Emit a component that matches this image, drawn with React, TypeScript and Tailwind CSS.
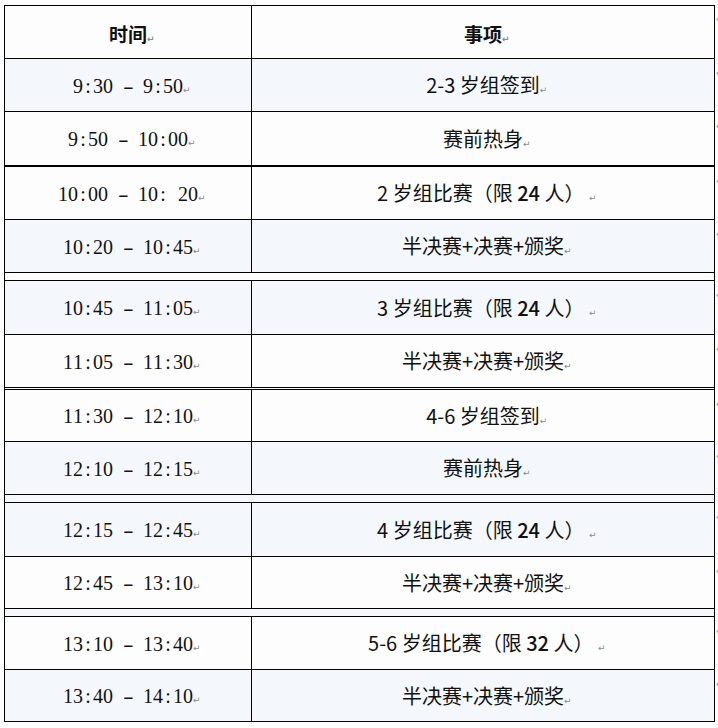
import React from "react";

type Row =
  | { kind: "row"; t: string; e: React.ReactNode; blue: boolean; h: string; b: string }
  | { kind: "gap"; h: string; blue: boolean };

const Mark = () => (
  <span className="inline-block w-0 overflow-visible whitespace-nowrap align-baseline text-[9px] leading-none text-[#8a8a8a]" style={{ fontFamily: '"DejaVu Sans", sans-serif' }}>
    ↵
  </span>
);

const Mono = ({ s }: { s: string }) => (
  <span className="inline-flex" style={{ fontFamily: '"Liberation Serif", serif' }}>
    {s.split("").map((c, i) => (
      <span key={i} className="inline-block w-[10px] text-center">
        {c === " " ? "\u00a0" : c === "-" ? <span className="inline-block scale-x-[1.6]">-</span> : c}
      </span>
    ))}
  </span>
);

const Match = ({ pre, n }: { pre: string; n: string }) => (
  <>
    {pre}组比赛（限 <span className="font-medium">{n}</span> 人）{"\u00a0"}
  </>
);

const rows: Row[] = [
  { kind: "row", t: "9:30 - 9:50", e: "2-3 岁组签到", blue: true, h: "h-[53px]", b: "border-b" },
  { kind: "row", t: "9:50 - 10:00", e: "赛前热身", blue: false, h: "h-[55px]", b: "border-b-2" },
  { kind: "row", t: "10:00 - 10: 20", e: <Match pre="2 岁" n="24" />, blue: false, h: "h-[53px]", b: "border-b" },
  { kind: "row", t: "10:20 - 10:45", e: "半决赛+决赛+颁奖", blue: true, h: "h-[53px]", b: "border-b" },
  { kind: "gap", h: "h-[8px]", blue: false },
  { kind: "row", t: "10:45 - 11:05", e: <Match pre="3 岁" n="24" />, blue: true, h: "h-[54px]", b: "border-b" },
  { kind: "row", t: "11:05 - 11:30", e: "半决赛+决赛+颁奖", blue: false, h: "h-[55px]", b: "border-b-[3px] border-double" },
  { kind: "row", t: "11:30 - 12:10", e: "4-6 岁组签到", blue: false, h: "h-[52px]", b: "border-b" },
  { kind: "row", t: "12:10 - 12:15", e: "赛前热身", blue: true, h: "h-[53px]", b: "border-b" },
  { kind: "gap", h: "h-[8px]", blue: true },
  { kind: "row", t: "12:15 - 12:45", e: <Match pre="4 岁" n="24" />, blue: true, h: "h-[54px]", b: "border-b" },
  { kind: "row", t: "12:45 - 13:10", e: "半决赛+决赛+颁奖", blue: false, h: "h-[52px]", b: "border-b" },
  { kind: "gap", h: "h-[8px]", blue: true },
  { kind: "row", t: "13:10 - 13:40", e: <Match pre="5-6 岁" n="32" />, blue: false, h: "h-[53px]", b: "border-b" },
  { kind: "row", t: "13:40 - 14:10", e: "半决赛+决赛+颁奖", blue: true, h: "h-[52px]", b: "border-b" },
];

const EndMark = ({ show }: { show: boolean }) => (
  <div className="h-0 w-[6px] shrink-0 overflow-visible">
    {show && (
      <span className="mt-[10px] ml-[1px] block text-[9px] leading-none text-[#9a9a9a]" style={{ fontFamily: '"DejaVu Sans", sans-serif' }}>
        ↵
      </span>
    )}
  </div>
);

export default function App() {
  return (
    <div className="min-h-[728px] w-[718px] overflow-hidden bg-white pl-[4px] pt-[5px] text-[#111]" style={{ fontFamily: '"Noto Sans CJK SC", "Noto Sans", sans-serif' }}>
      <div className="w-[720px]">
        {/* header */}
        <div className="flex">
          <div className="grid h-[54px] w-[711px] shrink-0 grid-cols-[247px_1fr] border border-black bg-[#fdfdfd]">
            <div className="flex items-center justify-center border-r border-black pt-[4px] text-[19px] font-bold">
              <span>
                时间
                <Mark />
              </span>
            </div>
            <div className="flex items-center justify-center pt-[4px] text-[19px] font-bold">
              <span>
                事项
                <Mark />
              </span>
            </div>
          </div>
          <EndMark show />
        </div>
        {rows.map((r, i) =>
          r.kind === "gap" ? (
            <div key={i} className="flex">
              <div className={`${r.h} w-[711px] shrink-0 border-x border-b border-black ${r.blue ? "bg-[#f4f8fd]" : "bg-[#fdfdfd]"}`} />
              <EndMark show={false} />
            </div>
          ) : (
            <div key={i} className="flex">
              <div className={`grid ${r.h} w-[711px] shrink-0 grid-cols-[247px_1fr] border-x border-black ${r.b} ${r.blue ? "bg-[#f4f8fd]" : "bg-[#fdfdfd]"}`}>
                <div className="flex items-center justify-center border-r border-black text-[20px]">
                  <span className="whitespace-pre">
                    <Mono s={r.t} />
                    <Mark />
                  </span>
                </div>
                <div className="flex items-center justify-center text-[20px]">
                  <span className="whitespace-pre">
                    {r.e}
                    <Mark />
                  </span>
                </div>
              </div>
              <EndMark show />
            </div>
          )
        )}
      </div>
    </div>
  );
}
